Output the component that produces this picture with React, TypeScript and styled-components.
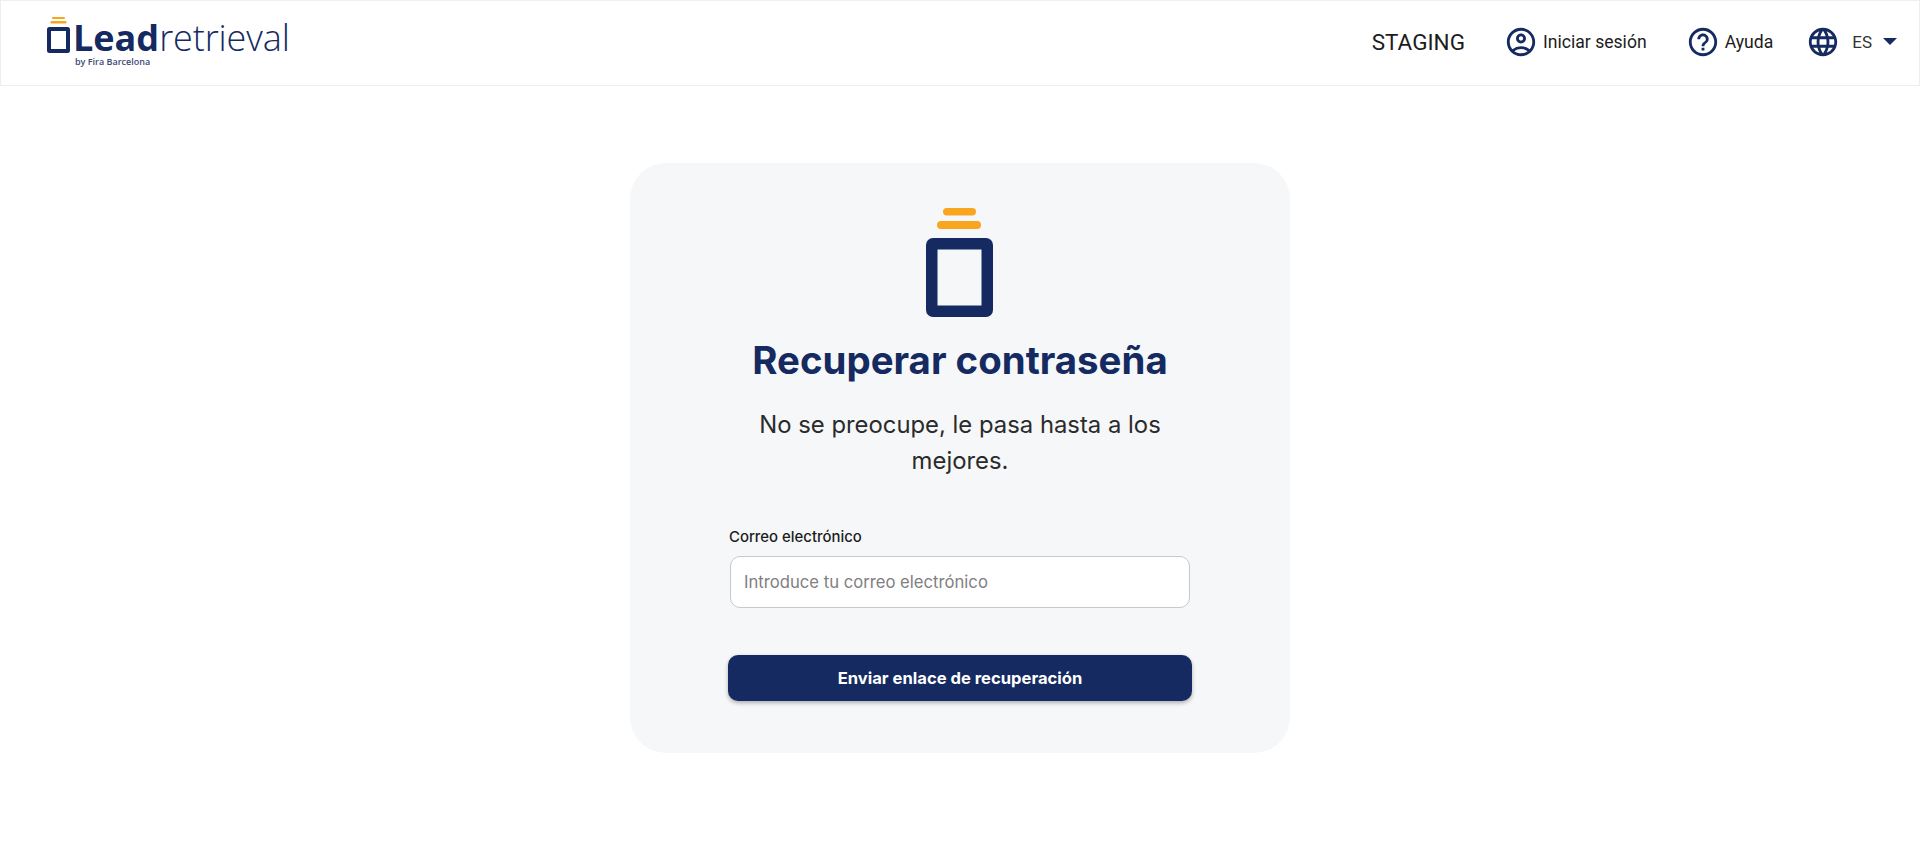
import { MdLanguage, MdOutlineAccountCircle, MdOutlineHelpOutline } from "react-icons/md";
import styled, { createGlobalStyle } from "styled-components";

const NAVY = "#152a60";
const ORANGE = "#f9a51f";

const GlobalStyle = createGlobalStyle`
  html, body {
    margin: 0;
    padding: 0;
    background: #fff;
  }
  * {
    box-sizing: border-box;
  }
`;

const Header = styled.header`
  height: 86px;
  display: flex;
  align-items: center;
  justify-content: space-between;
  padding: 0 22px 0 46px;
  border: 1px solid #eeeeee;
  border-top-color: #f0f0f0;
`;

const Logo = styled.div`
  display: grid;
  grid-template-columns: 23px auto;
  column-gap: 3px;
  margin-top: -2px;
  color: ${NAVY};
  font-family: "Open Sans", sans-serif;
`;

const LogoWord = styled.div`
  font-size: 36px;
  line-height: 38px;
  height: 38px;
  margin-top: 2px;
  white-space: nowrap;
  align-self: end;
`;

const LogoBold = styled.span`
  font-weight: 700;
`;

const LogoLight = styled.span`
  font-weight: 300;
  letter-spacing: -0.1px;
`;

const LogoSub = styled.div`
  grid-column: 2;
  font-size: 9px;
  font-weight: 600;
  line-height: 10px;
  padding-left: 2px;
  opacity: 0.85;
`;

const Nav = styled.nav`
  display: flex;
  align-items: center;
  margin-bottom: 3px;
  font-family: Roboto, sans-serif;
  color: #1c1c1c;
`;

const Staging = styled.span`
  font-size: 22.5px;
  margin-right: 39px;
`;

const NavItem = styled.a<{ $spacing: number }>`
  display: flex;
  align-items: center;
  gap: 5px;
  font-size: 17.6px;
  margin-right: ${(p) => p.$spacing}px;
  & svg {
    color: ${NAVY};
    font-size: 34px;
  }
`;

const Language = styled.div`
  display: flex;
  align-items: center;
  color: #333;
  font-size: 17px;
  & svg {
    color: ${NAVY};
    font-size: 34px;
  }
`;

const LanguageCode = styled.span`
  margin: 0 11px 0 12px;
`;

const Caret = styled.span`
  width: 0;
  height: 0;
  border-left: 7px solid transparent;
  border-right: 7px solid transparent;
  border-top: 7px solid ${NAVY};
`;

const Main = styled.main`
  display: flex;
  justify-content: center;
  padding-top: 77px;
`;

const Card = styled.section`
  width: 660px;
  height: 590px;
  padding: 45px 98px 0;
  border-radius: 36px;
  background: #f6f7f9;
  display: flex;
  flex-direction: column;
  align-items: center;
  font-family: Inter, sans-serif;
`;

const Mark = styled.svg`
  display: block;
  flex: none;
`;

const HeroMark = styled(Mark)`
  margin-left: -1px;
`;

const Title = styled.h1`
  margin: 20px 0 0;
  font-size: 38.4px;
  line-height: 46px;
  font-weight: 700;
  color: ${NAVY};
  white-space: nowrap;
`;

const Lead = styled.p`
  margin: 24px 0 0;
  width: 430px;
  font-size: 23.85px;
  line-height: 36px;
  text-align: center;
  color: #2b2b2b;
`;

const Form = styled.form`
  width: 100%;
  margin-top: 49px;
  display: flex;
  flex-direction: column;
`;

const Label = styled.label`
  font-size: 14.9px;
  line-height: 18px;
  font-weight: 550;
  color: #1c1c1c;
  margin-left: 1px;
`;

const Input = styled.input`
  margin: 10px 2px 0;
  height: 52px;
  padding: 0 13px;
  border: 1px solid #c9c9cc;
  border-radius: 10px;
  background: #fff;
  font-family: Inter, sans-serif;
  font-size: 16.67px;
  &::placeholder {
    color: #808080;
    opacity: 1;
  }
`;

const Submit = styled.button`
  margin-top: 47px;
  height: 46px;
  border: 0;
  border-radius: 10px;
  background: ${NAVY};
  color: #fff;
  font-family: Inter, sans-serif;
  font-size: 16.6px;
  font-weight: 700;
  box-shadow: 0 2px 4px rgba(0, 0, 0, 0.3);
`;

function HeaderMark() {
  return (
    <Mark width={23} height={36} viewBox="0 0 23 36">
      <rect x="5" y="0" width="13" height="2" rx="1" fill={ORANGE} />
      <rect x="3.500" y="4" width="16" height="2.500" rx="1.200" fill={ORANGE} />
      <path
        fillRule="evenodd"
        fill={NAVY}
        d="M2.500 10h18a2.500 2.500 0 0 1 2.500 2.500v21a2.500 2.500 0 0 1-2.500 2.500h-18A2.500 2.500 0 0 1 0 33.500v-21A2.500 2.500 0 0 1 2.500 10zM4 14v18h15V14z"
      />
    </Mark>
  );
}

function CardMark() {
  return (
    <HeroMark width={67} height={109} viewBox="0 0 67 109">
      <rect x="17" y="0" width="33" height="7.500" rx="3.700" fill={ORANGE} />
      <rect x="11" y="13" width="44" height="8" rx="4" fill={ORANGE} />
      <path
        fillRule="evenodd"
        fill={NAVY}
        d="M7 30h53a7 7 0 0 1 7 7v65a7 7 0 0 1-7 7H7a7 7 0 0 1-7-7V37a7 7 0 0 1 7-7zM11.500 41.500v56h44v-56z"
      />
    </HeroMark>
  );
}

export default function App() {
  return (
    <>
      <GlobalStyle />
      <Header>
        <Logo>
          <HeaderMark />
          <LogoWord>
            <LogoBold>Lead</LogoBold>
            <LogoLight>retrieval</LogoLight>
          </LogoWord>
          <LogoSub>by Fira Barcelona</LogoSub>
        </Logo>
        <Nav>
          <Staging>STAGING</Staging>
          <NavItem $spacing={39}>
            <MdOutlineAccountCircle />
            Iniciar sesión
          </NavItem>
          <NavItem $spacing={33}>
            <MdOutlineHelpOutline />
            Ayuda
          </NavItem>
          <Language>
            <MdLanguage />
            <LanguageCode>ES</LanguageCode>
            <Caret />
          </Language>
        </Nav>
      </Header>
      <Main>
        <Card>
          <CardMark />
          <Title>Recuperar contraseña</Title>
          <Lead>No se preocupe, le pasa hasta a los mejores.</Lead>
          <Form>
            <Label>Correo electrónico</Label>
            <Input type="email" placeholder="Introduce tu correo electrónico" />
            <Submit type="button">Enviar enlace de recuperación</Submit>
          </Form>
        </Card>
      </Main>
    </>
  );
}
